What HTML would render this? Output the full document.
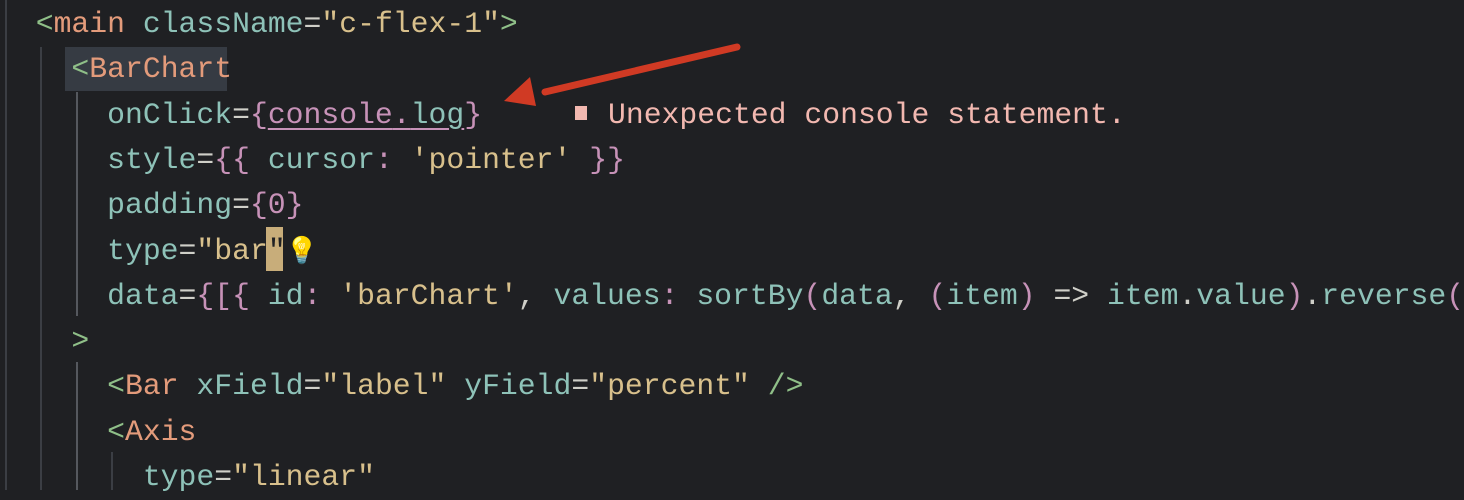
<!DOCTYPE html>
<html><head><style>
html,body{margin:0;padding:0;background:#1f2023;width:1464px;height:490px;overflow:hidden}
.c{position:absolute;left:0;top:0;width:1464px;height:490px}
.l{position:absolute;left:0;white-space:pre;font-family:"Liberation Mono",monospace;font-size:29.75px;line-height:45.3px;height:45.3px;color:#8ec2b8}
.g{color:#8fbf88}.t{color:#e39b7b}.s{color:#d8c08c}.p{color:#c792b8}.e{color:#cfcfc8}.w{color:#f2b8b0}
.gd{position:absolute;width:2px;background:#3b3e44}
</style></head><body><div class="c">
<div class="gd" style="left:5px;top:0;height:490px"></div>
<div class="gd" style="left:40px;top:47px;height:443px"></div>
<div class="gd" style="left:76px;top:92px;height:224px;background:#55585e"></div>
<div class="gd" style="left:76px;top:362px;height:128px;background:#55585e"></div>
<div class="gd" style="left:111px;top:452px;height:38px"></div>
<div style="position:absolute;left:65px;top:47px;width:162px;height:44px;background:#363b43"></div>
<div style="position:absolute;left:266px;top:227px;width:17px;height:44px;background:#c8ad7a"></div>
<div class="l" style="top:2px">  <span class="g">&lt;</span><span class="t">main</span> className<span class="e">=</span><span class="s">"c-flex-1"</span><span class="g">&gt;</span></div>
<div class="l" style="top:47px">    <span class="g">&lt;</span><span class="t">BarChart</span></div>
<div class="l" style="top:93px">      onClick<span class="e">=</span><span class="p">{</span><span class="p" style="text-decoration:underline;text-underline-offset:5px">console</span><span class="p" style="text-decoration:underline;text-underline-offset:5px">.</span><span style="text-decoration:underline;text-underline-offset:5px;text-decoration-color:#c792b8">log</span><span class="p">}</span></div>
<div class="l" style="top:138px">      style<span class="e">=</span><span class="p">{{</span> cursor<span class="p">:</span> <span class="s">'pointer'</span> <span class="p">}}</span></div>
<div class="l" style="top:183px">      padding<span class="e">=</span><span class="p">{0}</span></div>
<div class="l" style="top:229px">      type<span class="e">=</span><span class="s">"bar<span style="color:#1f2023">"</span></span><span style="font-size:26px">💡</span></div>
<div class="l" style="top:274px">      data<span class="e">=</span><span class="p">{[{</span> id<span class="p">:</span> <span class="s">'barChart'</span><span class="e">,</span> values<span class="p">:</span> sortBy<span class="p">(</span>data<span class="e">,</span> <span class="p">(</span>item<span class="p">)</span> <span class="e">=&gt;</span> item<span class="e">.</span>value<span class="p">)</span><span class="e">.</span>reverse<span class="p">(</span></div>
<div class="l" style="top:319px">    <span class="g">&gt;</span></div>
<div class="l" style="top:364px">      <span class="g">&lt;</span><span class="t">Bar</span> xField<span class="e">=</span><span class="s">"label"</span> yField<span class="e">=</span><span class="s">"percent"</span> <span class="g">/&gt;</span></div>
<div class="l" style="top:410px">      <span class="g">&lt;</span><span class="t">Axis</span></div>
<div class="l" style="top:455px">        type<span class="e">=</span><span class="s">"linear"</span></div>
<div style="position:absolute;left:575px;top:106px;width:12px;height:14px;background:#f2b8b0"></div>
<div class="l w" style="top:93px;left:608px">Unexpected console statement.</div>
<svg style="position:absolute;left:0;top:0" width="1464" height="490">
<line x1="737" y1="47" x2="545" y2="92" stroke="#d03a24" stroke-width="7" stroke-linecap="round"/>
<polygon points="504,101 530,77 536,106" fill="#d03a24"/>
</svg>
</div></body></html>
